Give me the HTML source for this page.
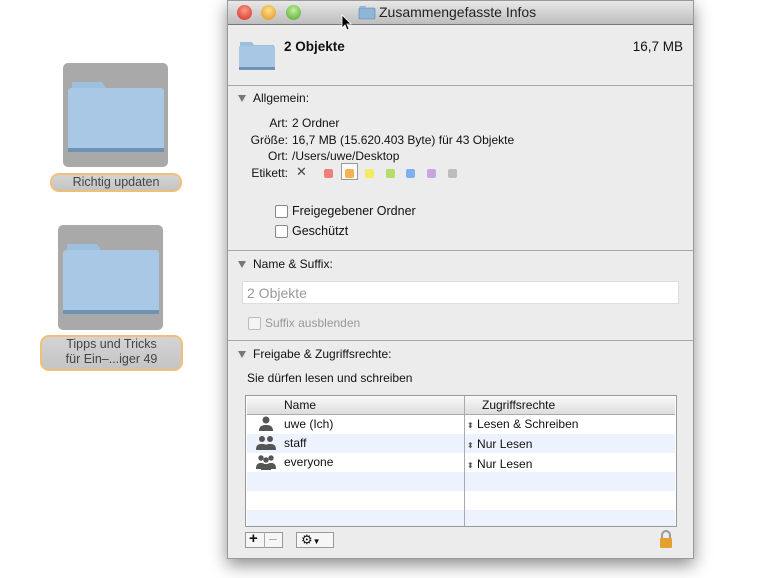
<!DOCTYPE html><html><head><style>
body{margin:0;width:770px;height:578px;background:#fff;position:relative;overflow:hidden;font-family:"Liberation Sans",sans-serif;font-size:12px;color:#111}
.a{position:absolute}
.fb{position:absolute;background:#a9a9a9;border-radius:5px}
.lbl{position:absolute;background:linear-gradient(#d4d4d4,#c4c4c4);border:2px solid #f0c07a;border-radius:9px;text-align:center;color:#444;font-size:12.5px;line-height:15px}
.win{position:absolute;left:227px;top:0;width:467px;height:559px;background:#ececec;box-shadow:0 6px 16px rgba(0,0,0,.45);border:1px solid #999;box-sizing:border-box}
.sep{position:absolute;left:0;right:0;height:1px;background:#a8a8a8}
.tri{position:absolute;width:0;height:0;border-left:4px solid transparent;border-right:4px solid transparent;border-top:7px solid #777}
.cb{position:absolute;width:11px;height:11px;border:1px solid #888;border-radius:2px;background:#fff}
.sw{position:absolute;width:9px;height:9px;border-radius:2px;top:168px}
.row{position:absolute;left:1px;right:1px;height:19px}
</style></head><body>
<div class="fb" style="left:63px;top:63px;width:105px;height:104px"></div>
<svg class="a" style="left:66px;top:78px" width="100" height="80"><path d="M6 4h30l4 6h54v4H6z" fill="#9dc0de"/><rect x="2" y="10" width="96" height="64" rx="3" fill="#a9c8e6"/><rect x="2" y="70" width="96" height="4" fill="#6e93b5"/></svg>
<div class="lbl" style="left:50px;top:173px;width:128px;height:15px">Richtig updaten</div>
<div class="fb" style="left:58px;top:225px;width:105px;height:105px"></div>
<svg class="a" style="left:61px;top:240px" width="100" height="80"><path d="M6 4h30l4 6h54v4H6z" fill="#9dc0de"/><rect x="2" y="10" width="96" height="64" rx="3" fill="#a9c8e6"/><rect x="2" y="70" width="96" height="4" fill="#6e93b5"/></svg>
<div class="lbl" style="left:40px;top:335px;width:139px;height:32px">Tipps und Tricks<br>für Ein–...iger 49</div>

<div class="win">
<div class="a" style="left:0;top:0;width:465px;height:23px;background:linear-gradient(#e8e8e8,#bdbdbd);border-bottom:1px solid #777"></div>
<div class="a" style="left:9px;top:4px;width:15px;height:15px;border-radius:50%;background:radial-gradient(circle at 50% 35%,#ff9a8a,#d12a1a)"></div>
<div class="a" style="left:33px;top:4px;width:15px;height:15px;border-radius:50%;background:radial-gradient(circle at 50% 35%,#ffe08a,#e0901a)"></div>
<div class="a" style="left:58px;top:4px;width:15px;height:15px;border-radius:50%;background:radial-gradient(circle at 50% 35%,#c4f09a,#4aa52a)"></div>
<svg class="a" style="left:113px;top:13px" width="12" height="18"><path d="M1 1v13l3-3 2 5 2-1-2-5h4z" fill="#000" stroke="#fff" stroke-width=".8"/></svg>
<svg class="a" style="left:130px;top:4px" width="18" height="15"><rect x="1" y="3" width="16" height="11" rx="1" fill="#8fb5d8" stroke="#5c84aa" stroke-width=".6"/><path d="M1 3h6l1-2H2z" fill="#8fb5d8"/></svg>
<div class="a" style="left:151px;top:3px;font-size:14px;color:#222">Zusammengefasste Infos</div>
<svg class="a" style="left:10px;top:38px" width="38" height="32"><path d="M2 3h12l2 3h20v3H2z" fill="#9cbfde"/><rect x="1" y="7" width="36" height="24" rx="2" fill="#a8c7e5"/><rect x="1" y="28" width="36" height="3" fill="#6e93b5"/></svg>
<div class="a" style="left:56px;top:38px;font-weight:bold;font-size:13.5px">2 Objekte</div>
<div class="a" style="right:10px;top:38px;font-size:13.5px">16,7 MB</div>
<div class="sep" style="top:84px"></div>
<div class="tri" style="left:10px;top:94px"></div><div class="a" style="left:25px;top:90px">Allgemein:</div>
<div class="a" style="left:0;width:60px;text-align:right;top:114px;line-height:16.5px">Art:<br>Größe:<br>Ort:<br>Etikett:</div>
<div class="a" style="left:64px;top:114px;line-height:16.5px">2 Ordner<br>16,7 MB (15.620.403 Byte) für 43 Objekte<br>/Users/uwe/Desktop</div>
<div class="a" style="left:68px;top:163px;font-size:13px;color:#444">✕</div>
<div class="sw" style="left:96px;background:#ef7f7a"></div>
<div class="a" style="left:113px;top:162px;width:17px;height:17px;border:1px solid #999;background:#fafafa;box-sizing:border-box"></div>
<div class="sw" style="left:117px;background:#f3b34e"></div>
<div class="sw" style="left:137px;background:#f1ec60"></div>
<div class="sw" style="left:158px;background:#b6dc6a"></div>
<div class="sw" style="left:178px;background:#7eb0f0"></div>
<div class="sw" style="left:199px;background:#c9a4e2"></div>
<div class="sw" style="left:220px;background:#bdbdbd"></div>
<div class="cb" style="left:47px;top:204px"></div><div class="a" style="left:64px;top:203px;font-size:12.5px">Freigegebener Ordner</div>
<div class="cb" style="left:47px;top:224px"></div><div class="a" style="left:64px;top:223px;font-size:12.5px">Geschützt</div>
<div class="sep" style="top:249px"></div>
<div class="tri" style="left:10px;top:260px"></div><div class="a" style="left:25px;top:256px">Name &amp; Suffix:</div>
<div class="a" style="left:14px;top:280px;width:437px;height:23px;background:#fff;border:1px solid #ddd;box-sizing:border-box;font-size:14px;color:#999;padding:3px 4px">2 Objekte</div>
<div class="cb" style="left:20px;top:316px;border-color:#bbb;background:#f4f4f4"></div><div class="a" style="left:37px;top:315px;color:#999">Suffix ausblenden</div>
<div class="sep" style="top:339px"></div>
<div class="tri" style="left:10px;top:350px"></div><div class="a" style="left:25px;top:346px">Freigabe &amp; Zugriffsrechte:</div>
<div class="a" style="left:19px;top:370px">Sie dürfen lesen und schreiben</div>
<div class="a" style="left:17px;top:394px;width:432px;height:132px;border:1px solid #999;background:#fff;box-sizing:border-box;overflow:hidden">
<div class="row" style="top:0;height:18px;background:linear-gradient(#fafafa,#ddd);border-bottom:1px solid #aaa"></div>
<div class="a" style="left:38px;top:2px">Name</div><div class="a" style="left:236px;top:2px">Zugriffsrechte</div>
<div class="row" style="top:38px;background:#edf3fe"></div><div class="row" style="top:76px;background:#edf3fe"></div><div class="row" style="top:114px;background:#edf3fe"></div>
<div class="a" style="left:218px;top:0;width:1px;height:132px;background:#aaa"></div>
<svg class="a" style="left:10px;top:20px" width="20" height="58" fill="#555">
<circle cx="10" cy="4" r="3.5"/><path d="M3 15c0-5 3-6 7-6s7 1 7 6z"/>
<circle cx="6" cy="23" r="3"/><circle cx="14" cy="23" r="3"/><path d="M0 34c0-5 2-6 6-6s6 1 6 6zM8 34c0-5 2-6 6-6s6 1 6 6z"/>
<circle cx="5" cy="42" r="2.7"/><circle cx="15" cy="42" r="2.7"/><circle cx="10" cy="44" r="2.7"/><path d="M0 53c0-5 2-6 5-6s5 1 5 6zM10 53c0-5 2-6 5-6s5 1 5 6zM5 54c0-5 2-6 5-6s5 1 5 6z"/>
</svg>
<div class="a" style="left:38px;top:19px;line-height:19px">uwe (Ich)<br>staff<br>everyone</div>
<div class="a" style="left:221px;top:19px;line-height:19px"><span style="font-size:8px;color:#555">⬍</span> Lesen &amp; Schreiben<br><span style="font-size:8px;color:#555">⬍</span> Nur Lesen<br><span style="font-size:8px;color:#555">⬍</span> Nur Lesen</div>
</div>
<div class="a" style="left:17px;top:531px;width:38px;height:16px;border:1px solid #999;background:#f6f6f6;box-sizing:border-box"></div>
<div class="a" style="left:36px;top:531px;width:1px;height:16px;background:#aaa"></div>
<div class="a" style="left:21px;top:529px;font-size:15px;font-weight:bold">+</div><div class="a" style="left:41px;top:529px;font-size:14px;color:#aaa">–</div>
<div class="a" style="left:68px;top:531px;width:38px;height:16px;border:1px solid #999;background:#f6f6f6;box-sizing:border-box;font-size:13px;line-height:14px;padding-left:4px">⚙<span style="font-size:8px">▼</span></div>
<svg class="a" style="left:430px;top:529px" width="16" height="19"><path d="M4 8V5a4 4 0 0 1 8 0v3" fill="none" stroke="#999" stroke-width="2"/><rect x="2" y="8" width="12" height="10" rx="1" fill="#e6a030"/></svg>
</div>
</body></html>
